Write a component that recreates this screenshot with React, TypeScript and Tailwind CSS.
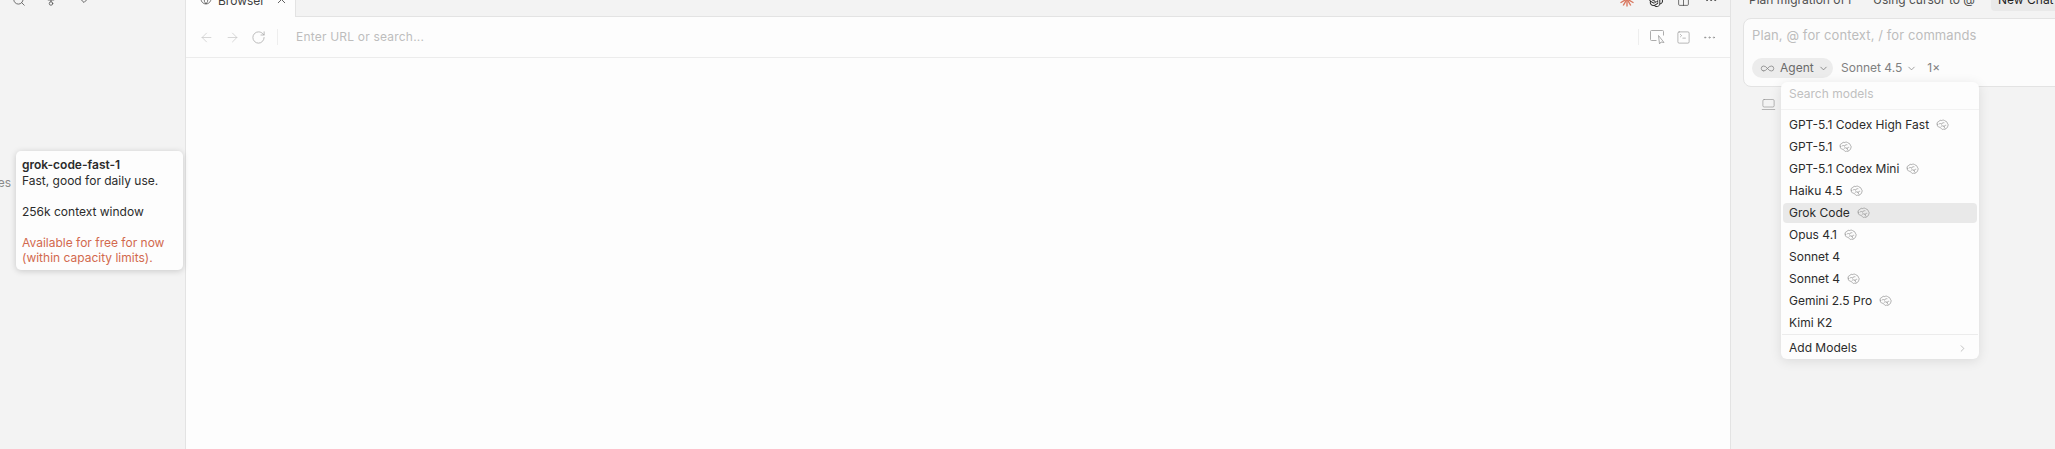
import { ArrowLeft, ArrowRight, ChevronDown, ChevronRight, Ellipsis, Globe, Infinity as InfinityIcon, LaptopMinimal, RotateCw, Search, SquareTerminal, X, Columns2, GitFork } from 'lucide-react';
import { SiOpenai } from 'react-icons/si';

const models = [
    { name: 'GPT-5.1 Codex High Fast', brain: true },
    { name: 'GPT-5.1', brain: true },
    { name: 'GPT-5.1 Codex Mini', brain: true },
    { name: 'Haiku 4.5', brain: true },
    { name: 'Grok Code', brain: true, active: true },
    { name: 'Opus 4.1', brain: true },
    { name: 'Sonnet 4', brain: false },
    { name: 'Sonnet 4', brain: true },
    { name: 'Gemini 2.5 Pro', brain: true },
    { name: 'Kimi K2', brain: false },
];

function Burst() {
    const rays = [0, 30, 60, 90, 120, 150, 180, 210, 240, 270, 300, 330];
    return (
        <svg width="16" height="16" viewBox="0 0 16 16" className="text-[#d9775f]">
            {rays.map((angle) => (
                <line key={angle} x1="8" y1="8" x2="8" y2="0.5" stroke="currentColor" strokeWidth="1.4" transform={`rotate(${angle} 8 8)`} />
            ))}
        </svg>
    );
}

function CursorBox() {
    return (
        <svg width="15" height="14" viewBox="0 0 15 14" fill="none" stroke="#a3a3a3" strokeWidth="0.9">
            <path d="M6.5 10.5H1.5a1 1 0 0 1-1-1V1.5a1 1 0 0 1 1-1h11a1 1 0 0 1 1 1v4" />
            <path d="M8.5 5.5l5.5 7-3-.5-1.5 2z" />
        </svg>
    );
}

// side-on brain, the lucide one reads as a circle at this size
function BrainIcon() {
    return (
        <svg width="13" height="12" viewBox="0 0 13 12" fill="none" stroke="#9a9a9a" strokeWidth="0.8" strokeLinecap="round" strokeLinejoin="round" className="shrink-0">
            <path d="M1.2 5.2C.6 3.8 1.6 2.6 2.8 2.6 3.2 1.4 4.8.9 5.8 1.6 6.8.8 8.4 1 9 2.1c1.2-.1 2.2.8 2.1 2 1.1.6 1.4 2 .6 3 .2 1-.5 2-1.5 2-.3 1.1-1.6 1.7-2.6 1.1-.9.5-1.8.2-2.3-.6-.4-.9-1.1-1.3-2-1.4C2 8.100 .8 6.600 1.200 5.200z" />
            <path d="M3 5c1-.8 2-.7 2.700 0M5.700 5c.4-1 1.300-1.500 2.300-1.300M5.200 7.200c1-.7 2.100-.6 2.800.2M8 7.400c.3-.8 1-1.200 1.800-1.100M8.800 9.200c-.3-.6-.4-1.100-.8-1.800" />
        </svg>
    );
}

export default function App() {
    return (
        <div className="relative flex h-[449px] w-[2055px] overflow-hidden bg-[#f3f3f3] font-['Inter',sans-serif] text-[12px] text-[#2b2b2b]">
            {/* Sidebar */}
            <aside className="w-[186px] shrink-0 border-r border-[#e3e3e3]">
                <div className="flex h-[7px] items-end overflow-hidden pl-3 text-[#555]">
                    <Search size={14} strokeWidth={1.4} className="shrink-0" />
                    <GitFork size={14} strokeWidth={1.4} className="ml-[18px] shrink-0" />
                    <ChevronDown size={12} strokeWidth={1.8} className="ml-[20px] shrink-0" />
                </div>
                <div className="-ml-[30px] mt-[168px] text-[12px] leading-4 text-[#8a8a8a]">Images</div>
            </aside>

            {/* Browser pane */}
            <main className="flex min-w-0 flex-1 flex-col border-r border-[#e3e3e3]">
                <div className="flex h-[17px] shrink-0 border-b border-[#e3e3e3]">
                    <div className="-mb-px flex w-[110px] items-end gap-[6px] overflow-hidden border-r border-[#e3e3e3] bg-[#fdfdfd] pl-[14px] text-[#3f3f3f]">
                        <Globe size={12} strokeWidth={1.4} className="mb-[12px] shrink-0" />
                        <span className="mb-[8px] shrink-0 text-[12px] leading-4">Browser</span>
                        <X size={13} strokeWidth={1.5} className="mb-[11px] ml-[4px] shrink-0" />
                    </div>
                    <div className="flex flex-1 items-end justify-end gap-[14px] overflow-hidden pr-[12px] text-[#3a3a3a]">
                        <span className="mb-[9px] shrink-0"><Burst /></span>
                        <SiOpenai size={14} className="mb-[9px] shrink-0 text-[#222]" />
                        <Columns2 size={13} strokeWidth={1.3} className="mb-[9px] shrink-0" />
                        <Ellipsis size={14} strokeWidth={1.5} className="mb-[9px] shrink-0" />
                    </div>
                </div>

                <div className="flex h-[41px] shrink-0 items-center border-b border-[#ececec] bg-[#fdfdfd] pl-[13px] pr-[13px] text-[#c4c4c4]">
                    <ArrowLeft size={15} strokeWidth={1.1} />
                    <ArrowRight size={15} strokeWidth={1.1} className="ml-[11px]" />
                    <RotateCw size={15} strokeWidth={1.2} className="ml-[11px] text-[#a5a5a5]" />
                    <div className="ml-[11px] h-4 w-px bg-[#eeeeee]" />
                    <span className="ml-[18px] text-[12px] tracking-[0.2px] text-[#bdbdbd]">Enter URL or search...</span>
                    <div className="ml-auto h-4 w-px bg-[#eeeeee]" />
                    <span className="ml-[11px]"><CursorBox /></span>
                    <SquareTerminal size={15} strokeWidth={1} className="ml-[11px] text-[#8f8f8f]" />
                    <Ellipsis size={15} strokeWidth={1.2} className="ml-[11px] text-[#8f8f8f]" />
                </div>

                <div className="flex-1 bg-[#fdfdfd]" />
            </main>

            {/* Chat panel */}
            <section className="w-[324px] shrink-0">
                <div className="flex h-[11px] items-end overflow-hidden pl-[18px] text-[12px] text-[#4f4f4f]">
                    <span className="mb-[3px] w-[124px] shrink-0 overflow-hidden whitespace-nowrap leading-4">Plan migration of l</span>
                    <span className="mb-[3px] w-[118px] shrink-0 whitespace-nowrap leading-4">Using cursor to @</span>
                    <div className="flex h-[11px] flex-1 items-end rounded-bl-[4px] bg-[#e9e9e9] pl-[7px]">
                        <span className="mb-[3px] whitespace-nowrap leading-4 text-[#1f1f1f]">New Chat</span>
                    </div>
                </div>

                {/* input runs past the panel edge, so no right border shows */}
                <div className="ml-[12px] -mr-[8px] mt-[7px] h-[69px] rounded-[8px] border border-[#e3e3e3] bg-[#fcfcfc] px-2 pt-[8px]">
                    <div className="text-[13px] leading-4 tracking-[0.1px] text-[#bdbdbd]">Plan, @ for context, / for commands</div>
                    <div className="mt-[15px] flex items-center text-[#808080]">
                        <div className="flex h-5 w-[81px] items-center rounded-full bg-[#ececec] pl-[8px] text-[#6a6a6a]">
                            <InfinityIcon size={15} strokeWidth={1} />
                            <span className="ml-[5px]">Agent</span>
                            <ChevronDown size={11} strokeWidth={1.6} className="ml-[4px]" />
                        </div>
                        <span className="ml-2">Sonnet 4.5</span>
                        <ChevronDown size={11} strokeWidth={1.6} className="ml-[4px]" />
                        <span className="ml-[10px]">1×</span>
                    </div>
                </div>

                <div className="ml-[30px] mt-[10px] text-[#8f8f8f]">
                    <LaptopMinimal size={15} strokeWidth={1} />
                </div>
            </section>

            {/* Hover tooltip */}
            <div className="absolute left-[16px] top-[151px] w-[167px] rounded-[5px] bg-[#fdfdfd] px-[6px] pb-[4px] pt-[6px] text-[12px] leading-[15.5px] text-[#2b2b2b] shadow-[0_1px_6px_rgba(0,0,0,0.18)]">
                <div className="font-semibold">grok-code-fast-1</div>
                <div>Fast, good for daily use.</div>
                <div className="mt-[15.5px]">256k context window</div>
                <div className="mt-[15.5px] text-[#d2694e]">Available for free for now</div>
                <div className="text-[#d2694e]">(within capacity limits).</div>
            </div>

            {/* Model dropdown */}
            <div className="absolute left-[1781px] top-[82px] w-[198px] rounded-[6px] bg-[#fdfdfd] shadow-[0_2px_12px_rgba(0,0,0,0.1)]">
                <div className="flex h-7 items-center border-b border-[#f2f2f2] px-2 pb-[4px] text-[#c0c0c0]">Search models</div>
                <div className="px-[2px] pt-[4px]">
                    {models.map((model, i) => (
                        <div key={i} className="flex h-[22px] items-center">
                            <div className={`flex h-5 flex-1 items-center gap-[7px] rounded-[4px] px-[6px] ${model.active ? 'bg-[#e9e9e9]' : ''}`}>
                                <span>{model.name}</span>
                                {model.brain && <BrainIcon />}
                            </div>
                        </div>
                    ))}
                </div>
                <div className="mx-[1px] flex h-[25px] items-center justify-between border-t border-[#ececec] pl-[7px] pr-[10px] pt-[2px]">
                    <span>Add Models</span>
                    <ChevronRight size={11} strokeWidth={1.3} className="text-[#9a9a9a]" />
                </div>
            </div>
        </div>
    );
}
